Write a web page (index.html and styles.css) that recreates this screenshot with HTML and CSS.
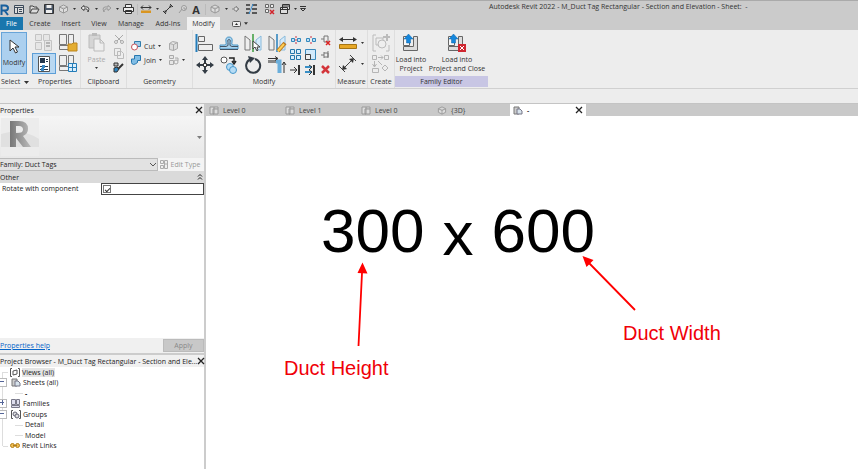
FILE: index.html
```html
<!DOCTYPE html>
<html lang="en">
<head>
<meta charset="utf-8">
<title>Autodesk Revit 2022</title>
<link rel="stylesheet" href="styles.css">
</head>
<body>
<svg class="defs" aria-hidden="true">
  <symbol id="sheet" viewBox="0 0 10 9"><path d="M1 1h5v7H1z" fill="#ccc" stroke="#777"/><path d="M4 3h3l2 2v3H4z" fill="#d7e3ec" stroke="#778"/></symbol>
  <symbol id="plan" viewBox="0 0 10 9"><path d="M1 1h4v7H1zM5 1h4v2M4 3h5v5H4z" fill="#ddd" stroke="#999"/></symbol>
  <symbol id="cube" viewBox="0 0 10 10"><path d="M5 1l4 2v4L5 9 1 7V3zM1 3l4 2 4-2M5 5v4" fill="#ddd" stroke="#999"/></symbol>
  <symbol id="drop" viewBox="0 0 5 3"><path d="M0 0h5L2.500 3z" fill="#333"/></symbol>
  <symbol id="cross" viewBox="0 0 8 8"><path d="M1 1l6 6M7 1L1 7" stroke="#222" stroke-width="1.300" fill="none"/></symbol>
  <symbol id="load" viewBox="0 0 18 18"><path d="M1.500 2.500h6v9h-6zM1.500 12.500v4h14v-14h-4v10z" fill="#f8f8f8" stroke="#666"/><path d="M12 3h3v13H2v-3h10z" fill="#ddd"/><path d="M6.500 0L11 5H8.500v4h-4V5H2z" fill="#1687dc" stroke="#0b65ad" stroke-width=".500"/></symbol>
</svg>

<header class="titlebar">
  <nav class="quick" aria-label="Quick access">
    <button class="logo" aria-label="Application menu"><svg width="9" height="11" viewBox="0 0 9 11"><path d="M1.500 11V1.500h3.500q3 0 3 2.500T5 6.500H2M4.500 6.500L8 11" fill="none" stroke="#175f9d" stroke-width="2"/></svg></button>
    <button aria-label="Home"><svg width="10" height="9" viewBox="0 0 10 9"><path d="M.5.5h9v8h-9zM.5 2.500h9M3.500 2.500v6M5 4.500h3M5 6.500h3" fill="#ddd" stroke="#3c4a5a"/></svg></button>
    <button aria-label="Open"><svg width="11" height="9" viewBox="0 0 11 9"><path d="M1 8V1h3l1 1h3v2M1 8l2-4h7L8 8z" fill="#ddd" stroke="#444"/></svg></button>
    <button aria-label="Save"><svg width="10" height="10" viewBox="0 0 10 10"><path d="M.5.5h9v9h-9z" fill="#4c5868" stroke="#333"/><path d="M2.500 1h5v3h-5zM2 6h6v3H2z" fill="#eee"/></svg></button>
    <button aria-label="Sync"><svg width="11" height="10"><use href="#cube"/></svg></button>
    <button aria-label="Sync options"><svg width="3" height="2"><use href="#drop"/></svg></button>
    <button aria-label="Undo"><svg width="10" height="8" viewBox="0 0 10 8"><path d="M4 .5L1 3l3 2.500V4q4-1 4 3 3-6-4-5z" fill="#eee" stroke="#444"/></svg></button>
    <button aria-label="Undo options"><svg width="3" height="2"><use href="#drop"/></svg></button>
    <button aria-label="Redo"><svg width="10" height="8" viewBox="0 0 10 8"><path d="M6 .5L9 3 6 5.500V4q-4-1-4 3-3-6 4-5z" fill="#ccc" stroke="#999"/></svg></button>
    <button aria-label="Redo options"><svg width="3" height="2"><use href="#drop"/></svg></button>
    <button aria-label="Print"><svg width="11" height="10" viewBox="0 0 11 10"><path d="M2.500 3V.5h6V3M.5 3.500h10v4H.5zM2.500 6.500h6v3h-6z" fill="#eee" stroke="#333"/></svg></button>
    <i class="rule"></i>
    <button aria-label="Measure"><svg width="10" height="9" viewBox="0 0 10 9"><path d="M0 2.500h10M2 .5L0 2.500l2 2M8 .5l2 2-2 2" stroke="#333" fill="none"/><path d="M0 5.500h10V8H0z" fill="#d99520"/></svg></button>
    <button aria-label="Measure options"><svg width="3" height="2"><use href="#drop"/></svg></button>
    <button aria-label="Aligned dimension"><svg width="10" height="10" viewBox="0 0 10 10"><path d="M2 8l6-6M0 7l3 3M7 0l3 3" stroke="#333" fill="none"/><path d="M1 9l1-3 2 2zM9 1L6 2l2 2z" fill="#333"/></svg></button>
    <button aria-label="Tag"><svg width="9" height="9" viewBox="0 0 9 9"><circle cx="6" cy="3" r="2.500" fill="#ddd" stroke="#999"/><path d="M4 4L1 8M6 2v2h2" stroke="#999" fill="none"/></svg></button>
    <button class="letter" aria-label="Text">A</button>
    <i class="rule"></i>
    <button aria-label="3D view"><svg width="10" height="10"><use href="#cube"/></svg></button>
    <button aria-label="3D options"><svg width="3" height="2"><use href="#drop"/></svg></button>
    <button aria-label="Section"><svg width="8" height="8" viewBox="0 0 8 8"><path d="M0 4h2M4 1l3 3-3 3" stroke="#888" fill="none"/><circle cx="4" cy="4" r="2" fill="#ddd" stroke="#888"/></svg></button>
    <button aria-label="Thin lines"><svg width="11" height="10" viewBox="0 0 11 10"><path d="M0 1h4M6 1h5M0 5h4M6 5h5M0 9h4M6 9h5" stroke="#333" stroke-width="1.500"/><path d="M7 0L3 10" stroke="#3c91d5"/></svg></button>
    <button aria-label="Close inactive"><svg width="10" height="11" viewBox="0 0 10 11"><path d="M.5.5h3v3h-3zM5.500.5h3v3h-3zM.5 5.500h3v3h-3z" fill="#eee" stroke="#666"/><path d="M5 6l4 4M9 6l-4 4" stroke="#d2222a" stroke-width="1.500"/></svg></button>
    <button aria-label="Switch windows"><svg width="10" height="10" viewBox="0 0 10 10"><path d="M2.500.5h7v5h-7zM2.500 2h7M.5 3.500h7v6h-7zM.5 5.500h7" fill="#ddd" stroke="#333"/></svg></button>
    <button aria-label="Window options"><svg width="3" height="2"><use href="#drop"/></svg></button>
    <button aria-label="Customize"><svg width="6" height="6" viewBox="0 0 6 6"><path d="M0 .5h6M.5 2.500h5L3 5z" stroke="#333" fill="none"/></svg></button>
  </nav>
  <div class="caption">Autodesk Revit 2022 - M_Duct Tag Rectangular - Section and Elevation - Sheet:&nbsp; -</div>
</header>

<nav class="menu" aria-label="Ribbon tabs">
  <a class="file" href="#">File</a><a href="#">Create</a><a href="#">Insert</a><a href="#">View</a><a href="#">Manage</a><a href="#">Add-Ins</a><a class="current" href="#">Modify</a>
  <button aria-label="Ribbon display"><svg width="9" height="6" viewBox="0 0 9 6"><rect x=".5" y=".5" width="8" height="5" rx="1" fill="#eee" stroke="#555"/><path d="M3 4l1.500-2L6 4z" fill="#222"/></svg><svg width="4" height="3"><use href="#drop"/></svg></button>
</nav>

<section class="ribbon">
  <div class="group">
    <div class="body select"><button class="modify"><svg width="11" height="16" viewBox="0 0 11 16"><path d="M1 1v11l3-3 2.500 5 2-1L6 8h4z" fill="#fff" stroke="#333"/></svg>Modify</button></div>
    <h2>Select <svg width="5" height="3"><use href="#drop"/></svg></h2>
  </div>
  <div class="group">
    <div class="body props">
      <button aria-label="Family category"><svg width="20" height="19" viewBox="0 0 20 19"><path d="M1.500 1.500h6v6h-6zM9.500 1.500h6v6h-6zM1.500 9.500h6v7h-6zM10.500 7.500h7v10h-7z" fill="#e6e6e6" stroke="#c4c4c4"/><path d="M12 10h4M12 13h4" stroke="#b5b5b5" stroke-width="2"/></svg></button>
      <button aria-label="Family types"><svg width="20" height="19" viewBox="0 0 20 19"><path d="M1.500 1.500h7v10h-7zM10.500 1.500h5v10h-5zM1.500 12.500h14v4h-14z" fill="#eee" stroke="#777"/><path d="M10 11h4l1-1h4v8h-9z" fill="#e4ad31" stroke="#bd851c"/></svg></button>
      <button class="on" aria-label="Properties"><svg width="14" height="18" viewBox="0 0 14 18"><path d="M1.500 1.500h11v15h-11z" fill="#fff" stroke="#555"/><path d="M3 3h5v5H3z" fill="#26384d"/><path d="M9 4.500h2M9 6.500h2M3 11.500h8M3 14.500h8" stroke="#26384d"/><path d="M5 10h3v3H5zM4 13h3v3H4z" fill="#3b8ac6"/></svg></button>
      <button aria-label="Type properties"><svg width="20" height="19" viewBox="0 0 20 19"><path d="M1.500 1.500h7v10h-7zM10.500 1.500h5v10h-5zM1.500 12.500h14v4h-14z" fill="#eee" stroke="#777"/><path d="M10.500 9.500h8v8h-8zM14.500 9.500v8M10.500 13.500h8" fill="#dbeefb" stroke="#247db9"/></svg></button>
    </div>
    <h2>Properties</h2>
  </div>
  <div class="group">
    <div class="body clip">
      <button class="paste"><svg width="17" height="20" viewBox="0 0 17 20"><path d="M1 3h11v13H1z" fill="#d5d5d5" stroke="#bbb"/><path d="M4 1h5v3H4z" fill="#bbb"/><path d="M6 7h6l4 4v8H6zM12 7v4h4" fill="#eee" stroke="#bbb"/></svg><span>Paste</span><svg width="3" height="2"><use href="#drop"/></svg></button>
      <div class="stack">
        <button aria-label="Cut"><svg width="10" height="10" viewBox="0 0 10 10"><path d="M1 1l6 6M9 1L3 7" stroke="#aaa" fill="none"/><circle cx="2" cy="8" r="1.500" fill="none" stroke="#aaa"/><circle cx="8" cy="8" r="1.500" fill="none" stroke="#aaa"/></svg></button>
        <button aria-label="Copy"><svg width="10" height="11" viewBox="0 0 10 11"><path d="M.5.5h6v7h-6zM3.500 3.500h4l2 2v5h-6z" fill="#eee" stroke="#bbb"/></svg></button>
        <button aria-label="Match type"><svg width="11" height="11" viewBox="0 0 11 11"><path d="M1 1h4v3H1z" fill="#bbb" stroke="#333"/><path d="M1 10V6l3-1 2 2-2 3z" fill="#2f83bd" stroke="#333"/><path d="M5 7l5-5" stroke="#333" stroke-width="2"/></svg></button>
      </div>
    </div>
    <h2>Clipboard</h2>
  </div>
  <div class="group">
    <div class="body geo">
      <button><svg width="10" height="10" viewBox="0 0 10 10"><path d="M3.500.5h6v5h-6z" fill="#9acbea" stroke="#317cab"/><circle cx="3.500" cy="6" r="3" fill="#fff" stroke="#c5525a"/></svg><span>Cut</span><svg width="3" height="2"><use href="#drop"/></svg></button>
      <button aria-label="Cope"><svg width="9" height="10" viewBox="0 0 9 10"><path d="M.5 2.500l4 1v6l-4-1zM4.500 3.500l4-2v6l-4 2M.5 2.500l3-2 5 1" fill="#ddd" stroke="#aaa"/></svg></button>
      <button><svg width="10" height="10" viewBox="0 0 10 10"><path d="M3.500.5h6v5h-3v2q-5 4-6 0V4h3z" fill="#80bde5" stroke="#2677ae"/></svg><span>Join</span><svg width="3" height="2"><use href="#drop"/></svg></button>
      <button aria-label="Split face"><svg width="10" height="10" viewBox="0 0 10 10"><path d="M.5.5h4v3h-4zM6 3h3v3M.5 5.500h4v4h-4z" fill="#e6e6e6" stroke="#aaa"/><circle cx="7" cy="7" r="2" fill="#eee" stroke="#aaa"/></svg><svg width="3" height="2"><use href="#drop"/></svg></button>
    </div>
    <h2>Geometry</h2>
  </div>
  <div class="group">
    <div class="body edit">
      <div class="large">
        <button aria-label="Align"><svg width="20" height="19" viewBox="0 0 20 19"><path d="M1.500 0v18" stroke="#237dbb" stroke-width="2"/><path d="M3.500 2.500h6v5h-6zM3.500 10.500h14v6h-14z" fill="#eee" stroke="#666"/></svg></button>
        <button aria-label="Offset"><svg width="20" height="18" viewBox="0 0 20 18"><path d="M1 11h5q2 0 1-3-1-5 3-5t3 5q-1 3 1 3h5v4H1z" fill="#a9d3ef" stroke="#4b96c6"/><path d="M1 15.500h18M1 12.500h6q3 0 2-4-1-3 1-3t1 3q-1 4 2 4h6" fill="none" stroke="#456"/></svg></button>
        <button aria-label="Mirror axis"><svg width="18" height="19" viewBox="0 0 18 19"><path d="M1 2l5 4v10H1z" fill="#eee" stroke="#777"/><path d="M17 2l-5 4v10h5z" fill="#d5ebfb" stroke="#8abbdc"/><path d="M9 0v18" stroke="#3a9b3d" stroke-width="1.500"/><path d="M9 7v8l2-2 2 4 1-1-1-3h3z" fill="#fff" stroke="#444"/></svg></button>
        <button aria-label="Mirror draw"><svg width="18" height="19" viewBox="0 0 18 19"><path d="M1 2l5 4v10H1z" fill="#eee" stroke="#777"/><path d="M17 2l-5 4v10h5z" fill="#d5ebfb" stroke="#8abbdc"/><path d="M9 0v18" stroke="#277fbb" stroke-width="1.500"/><path d="M10 17l7-8" stroke="#b9781f" stroke-width="4"/><path d="M10 17l6-7" stroke="#ffcf54" stroke-width="2"/></svg></button>
        <button aria-label="Move"><svg width="18" height="18" viewBox="0 0 18 18"><path d="M9 0l3 4H6zM9 18l3-4H6zM0 9l4-3v6zM18 9l-4-3v6zM8 4h2v3H8zM8 11h2v3H8zM4 8h3v2H4zM11 8h3v2h-3z" fill="#333c45"/><path d="M7.500 7.500h3v3h-3z" fill="#fff" stroke="#333"/></svg></button>
        <button aria-label="Copy element"><svg width="18" height="18" viewBox="0 0 18 18"><circle cx="4" cy="4" r="3" fill="#fff" stroke="#555"/><path d="M9 2h5v4M12 5l2 3 2-3" fill="none" stroke="#222" stroke-width="1.500"/><circle cx="10" cy="11" r="3.500" fill="#b6dcf5" stroke="#4697ca"/><circle cx="13" cy="14" r="3.500" fill="#b6dcf5" stroke="#4697ca"/></svg></button>
        <button aria-label="Rotate"><svg width="18" height="18" viewBox="0 0 18 18"><path d="M11 3a7 7 0 1 1-5 .5" fill="none" stroke="#333c45" stroke-width="2"/><path d="M4 0l7 2-5 5z" fill="#333c45"/></svg></button>
        <button aria-label="Trim"><svg width="18" height="18" viewBox="0 0 18 18"><path d="M8 5.500h3.500V17" fill="none" stroke="#6aaedb" stroke-width="4"/><path d="M0 5.500h8" stroke="#888" stroke-width="3"/><path d="M0 2.500h10M7 .5l3 2-3 2M16 17V6M14 9l2-3 2 3" fill="none" stroke="#333"/></svg></button>
      </div>
      <div class="small">
        <button aria-label="Split"><svg width="10" height="8" viewBox="0 0 10 8"><path d="M.5 2.500h3v3h-3zM6.500 2.500h3v3h-3z" fill="#c0e0f5" stroke="#3388bd"/><path d="M5 0v8" stroke="#c34" stroke-dasharray="2 1"/></svg></button>
        <button aria-label="Split gap"><svg width="10" height="8" viewBox="0 0 10 8"><path d="M.5 2.500h3v3h-3zM6.500 2.500h3v3h-3z" fill="#c0e0f5" stroke="#3388bd"/><path d="M5 0v2M5 6v2" stroke="#c34"/></svg></button>
        <button aria-label="Unpin"><svg width="10" height="10" viewBox="0 0 10 10"><path d="M0 4h3V1h4v6H3V4" fill="none" stroke="#777"/><path d="M5 6l4 4M9 6l-4 4" stroke="#d22" stroke-width="1.500"/></svg></button>
        <button aria-label="Array"><svg width="11" height="11" viewBox="0 0 11 11"><path d="M.5.5h4v4h-4zM6.500.5h4v4h-4zM.5 6.500h4v4h-4zM6.500 6.500h4v4h-4z" fill="#d9eefc" stroke="#2476ab"/></svg></button>
        <button aria-label="Scale"><svg width="11" height="11" viewBox="0 0 11 11"><path d="M.5.5h10v10H.5z" fill="#d2eafb" stroke="#3b89bb"/><path d="M.5 5.500h5v5h-5z" fill="#eee" stroke="#444"/></svg></button>
        <button aria-label="Pin"><svg width="9" height="8" viewBox="0 0 9 8"><path d="M0 4h3M3 1v6M3 2h4v4H3M7 0v7" fill="none" stroke="#777"/></svg></button>
        <button aria-label="Trim single"><svg width="11" height="10" viewBox="0 0 11 10"><path d="M9 0v10" stroke="#333" stroke-width="2"/><path d="M0 5h7M4 2l3 3-3 3" stroke="#333" fill="none"/></svg></button>
        <button aria-label="Trim multiple"><svg width="11" height="10" viewBox="0 0 11 10"><path d="M9 0v10" stroke="#333" stroke-width="2"/><path d="M0 2h7M0 7h7" stroke="#388fc6" stroke-width="2"/><path d="M4 0l3 2-3 3M4 5l3 2-3 3" stroke="#333" fill="none"/></svg></button>
        <button aria-label="Delete"><svg width="9" height="9" viewBox="0 0 9 9"><path d="M1 1l7 7M8 1L1 8" stroke="#d3353b" stroke-width="2.500"/></svg></button>
      </div>
    </div>
    <h2>Modify</h2>
  </div>
  <div class="group">
    <div class="body measure">
      <button aria-label="Measure distance"><svg width="18" height="12" viewBox="0 0 18 12"><path d="M2 2.500h14" stroke="#333"/><path d="M0 2.500L4 0v5zM18 2.500L14 0v5z" fill="#333"/><path d="M.5 7.500h17v4H.5z" fill="#e7a827" stroke="#a67514"/></svg><svg width="3" height="2"><use href="#drop"/></svg></button>
      <button aria-label="Dimension"><svg width="18" height="18" viewBox="0 0 18 18"><path d="M4 14L14 4M0 11l6 6M11 0l6 6" stroke="#444"/><path d="M3 15l1-5 4 4zM15 3l-5 1 4 4z" fill="#333"/></svg><svg width="3" height="2"><use href="#drop"/></svg></button>
    </div>
    <h2>Measure</h2>
  </div>
  <div class="group">
    <div class="body create">
      <button aria-label="Create group"><svg width="18" height="18" viewBox="0 0 18 18"><path d="M4 1H1v16h3M14 17h3v-6M4 4h7v7H4z" fill="#eee" stroke="#bbb"/><circle cx="10" cy="10" r="4" fill="#eee" stroke="#bbb"/><path d="M15 0v7M11 3h7" stroke="#bbb" stroke-width="2"/></svg></button>
      <button aria-label="Create similar"><svg width="18" height="18" viewBox="0 0 18 18"><path d="M.5.5h4v4h-4zM12.500.5h4v4h-4zM.5 13.500h6v4h-6zM13 10l3 3-3 3-3-3zM6 2.500h5M2.500 6v6M6 6l4 4M9 .5l2 2-2 2M.5 9l2 3 2-3" fill="none" stroke="#b5b5b5"/></svg></button>
    </div>
    <h2>Create</h2>
  </div>
  <div class="group family">
    <div class="body loads">
      <button><svg width="18" height="18"><use href="#load"/></svg><span>Load into<br>Project</span></button>
      <button><svg width="20" height="18" viewBox="0 0 20 18"><use href="#load" width="18" height="18"/><path d="M11 10h8v8h-8z" fill="#cf2630"/><path d="M13 12l4 4M17 12l-4 4" stroke="#fff"/></svg><span>Load into<br>Project and Close</span></button>
    </div>
    <h2>Family Editor</h2>
  </div>
</section>
<div class="options"></div>

<main>
  <aside>
    <section class="properties">
      <header><h1>Properties</h1><button aria-label="Close properties"><svg width="8" height="8"><use href="#cross"/></svg></button></header>
      <div class="preview">
        <svg width="38" height="38" viewBox="0 0 38 38"><defs><linearGradient id="metal" x2="1"><stop stop-color="#777"/><stop offset="1" stop-color="#bbb"/></linearGradient></defs><path d="M0 0h38v38H0z" fill="#ececec"/><path d="M0 16q20-7 38 5v8H0z" fill="#e0e0e0"/><path d="M9 3v26h6v-9l7 9h8l-8-11q5-2 5-7 0-8-9-8zM15 8h3q4 0 4 3.500T17 15h-2z" fill="url(#metal)" fill-rule="evenodd"/></svg>
        <svg width="5" height="3" opacity=".6"><use href="#drop"/></svg>
      </div>
      <div class="family-row">
        <select aria-label="Family"><option>Family: Duct Tags</option></select>
        <svg class="chevron" width="6" height="4" viewBox="0 0 6 4"><path d="M0 0l3 3 3-3" fill="none" stroke="#555"/></svg>
        <button disabled><svg width="9" height="9" viewBox="0 0 9 9"><path d="M.5.5h3v3h-3zM4.500.5h3v8h-3zM.5 5.500h3v3h-3zM5 4h3" fill="#eee" stroke="#aaa"/></svg>Edit Type</button>
      </div>
      <div class="category"><span>Other</span><svg width="4" height="6" viewBox="0 0 4 6"><path d="M0 2.500l2-2 2 2M0 5.500l2-2 2 2" fill="none" stroke="#222"/></svg></div>
      <div class="property"><label for="rotate">Rotate with component</label><div><input id="rotate" type="checkbox" checked></div></div>
      <div class="space"></div>
      <footer><a href="#">Properties help</a><button disabled>Apply</button></footer>
    </section>
    <section class="browser">
      <header><h1>Project Browser - M_Duct Tag Rectangular - Section and Ele...</h1><button aria-label="Close browser"><svg width="8" height="8"><use href="#cross"/></svg></button></header>
      <ul>
        <li class="picked"><svg width="10" height="9" viewBox="0 0 10 9"><path d="M2 .5H.5v8H2M8 .5h1.500v8H8M3 3l4-1v4L3 7z" fill="none" stroke="#555"/></svg><span>Views (all)</span></li>
        <li class="minus"><svg width="10" height="9"><use href="#sheet"/></svg><span>Sheets (all)</span></li>
        <li class="leaf"><b>-</b></li>
        <li class="plus"><svg width="10" height="9" viewBox="0 0 10 9"><path d="M.5.5h4v5h-4zM5.500.5h3v5h-3zM.5 6.500h8v2h-8z" fill="#dde" stroke="#778"/></svg><span>Families</span></li>
        <li class="minus"><svg width="10" height="9" viewBox="0 0 10 9"><path d="M2 .5H.5v8H2M8 .5h1.500v8H8" fill="none" stroke="#555"/><circle cx="4" cy="4" r="2" fill="#ddd" stroke="#667"/><circle cx="6" cy="6" r="2" fill="#ddd" stroke="#667"/></svg><span>Groups</span></li>
        <li class="leaf"><span>Detail</span></li>
        <li class="leaf"><span>Model</span></li>
        <li><svg width="10" height="5" viewBox="0 0 10 5"><rect x=".5" y=".5" width="4" height="4" rx="2" fill="#f0bd54" stroke="#b37f18"/><rect x="5.500" y=".5" width="4" height="4" rx="2" fill="#f0bd54" stroke="#b37f18"/><path d="M3 2.500h4" stroke="#b37f18"/></svg><span>Revit Links</span></li>
      </ul>
    </section>
  </aside>
  <section class="workspace">
    <nav class="views" aria-label="Open views">
      <a href="#"><svg width="10" height="9"><use href="#plan"/></svg>Level 0</a>
      <a href="#"><svg width="10" height="9"><use href="#plan"/></svg>Level 1</a>
      <a href="#"><svg width="10" height="9"><use href="#plan"/></svg>Level 0</a>
      <a href="#"><svg width="10" height="9"><use href="#cube"/></svg>{3D}</a>
      <a class="active" href="#"><svg width="10" height="9"><use href="#sheet"/></svg><b>-</b><svg class="close" width="8" height="8"><use href="#cross"/></svg></a>
    </nav>
    <div class="canvas">
      <div class="tag"><span>300</span><span class="by">x</span><span>600</span></div>
      <svg class="arrows" width="480" height="260" viewBox="0 0 480 260"><path d="M152.500 230L156 157M429 194L383 147" stroke="#f00" stroke-width="1.800"/><path d="M156.500 146.500L161.500 157.500L151.500 157zM376.500 140L387.500 144L380.500 151z" fill="#f00"/></svg>
      <p class="note height">Duct Height</p>
      <p class="note width">Duct Width</p>
    </div>
  </section>
</main>
</body>
</html>
```
FILE: styles.css
```css
* { box-sizing: border-box; }
body {
  margin: 0;
  min-height: 100vh;
  display: flex;
  flex-direction: column;
  overflow: hidden;
  background: #ededed;
  color: #333;
  font: 7px/9px "Open Sans", "Noto Sans", sans-serif;
}
button {
  margin: 0;
  padding: 0;
  border: 0;
  background: none;
  color: inherit;
  font: inherit;
  display: flex;
  align-items: center;
  justify-content: center;
}
a { color: inherit; text-decoration: none; }
h1, h2, p, ul { margin: 0; padding: 0; font: inherit; }
svg { display: block; flex: none; overflow: visible; }
.defs { position: absolute; width: 0; height: 0; }

/* Title bar */
.titlebar {
  height: 17px;
  display: flex;
  justify-content: space-between;
  background: #cbcbcb;
  border-top: 1px solid #aaa;
}
.quick {
  display: grid;
  grid-template-columns: 11px 15px 16px 14px 14px 8px 14px 8px 13px 8px 14px 4px 14px 8px 14px 14px 14px 5px 14px 8px 12px 19px 17px 14px 6px 10px;
  align-items: center;
}
.logo { justify-content: flex-start; }
.rule { justify-self: center; width: 1px; height: 11px; background: #bbb; }
.letter { font-size: 11px; font-weight: bold; }
.caption { width: 369px; padding-top: 1px; white-space: nowrap; }

/* Ribbon tabs */
.menu {
  height: 13px;
  display: grid;
  grid-template-columns: 23px 34px 28px 28px 36px 38px 33px 40px;
  background: #cbcbcb;
  line-height: 13px;
  text-align: center;
}
.menu .file { background: #1976ad; color: #fff; }
.menu .current { background: #f0f0f0; }
.menu button { gap: 3px; }

/* Ribbon */
.ribbon {
  height: 58px;
  display: grid;
  grid-template-columns: 30px 51px 46px 66px 143px 32px 27px 93px;
  background: #ededed;
}
.group {
  display: flex;
  flex-direction: column;
  border-right: 1px solid #dedede;
  min-width: 0;
}
.group:first-child, .family { border: 0; }
.group h2 {
  height: 11px;
  line-height: 11px;
  text-align: center;
  white-space: nowrap;
}
.group h2 svg { display: inline-block; vertical-align: middle; margin-left: 2px; }
.family h2 { background: #c8c6e4; }
.body { height: 46px; padding-top: 2px; }
.select { padding-left: 1px; }
.modify {
  width: 26px;
  height: 42px;
  flex-direction: column;
  gap: 3px;
  background: #acd0ef;
  border: 1px solid #68a4d8;
}
.props {
  display: grid;
  grid-template-columns: 24px 24px;
  grid-template-rows: 21px 21px;
  padding-left: 2px;
}
.props .on { background: #b9d8f2; border: 1px solid #5c9ed7; }
.clip { display: grid; grid-template-columns: 31px 13px; }
.paste { flex-direction: column; gap: 3px; color: #aaa; justify-content: flex-start; }
.stack { display: grid; grid-template-rows: repeat(3, 14px); }
.geo {
  display: grid;
  grid-template-columns: 38px 22px;
  grid-template-rows: 14px 14px;
  padding: 9px 0 0 4px;
  align-content: start;
}
.geo button { justify-content: flex-start; gap: 3px; }
.edit { display: grid; grid-template-columns: 95px 46px; }
.large { display: grid; grid-template-columns: repeat(4, 24px); grid-template-rows: 22px 22px; }
.small { display: grid; grid-template-columns: repeat(3, 15px); grid-template-rows: repeat(3, 15px); }
.measure, .create { display: grid; grid-template-rows: 21px 21px; }
.measure button { gap: 4px; }
.loads { display: grid; grid-template-columns: 32px 60px; padding-top: 4px; }
.loads button { flex-direction: column; gap: 3px; justify-content: flex-start; white-space: nowrap; }
.options { height: 16px; border-top: 1px solid #d0d0d0; border-bottom: 1px solid #c4c4c4; }

/* Side panels */
main { flex: 1; display: grid; grid-template-columns: 206px minmax(0, 1fr); }
aside { display: flex; flex-direction: column; border-right: 2px solid #ccc; background: #f0f0f0; color: #222; }
.properties { flex: 1; display: flex; flex-direction: column; }
aside header {
  height: 12px;
  display: flex;
  align-items: center;
  justify-content: space-between;
  padding-right: 1px;
  white-space: nowrap;
}
.preview {
  height: 42px;
  display: flex;
  align-items: center;
  justify-content: space-between;
  padding: 0 2px 0 1px;
  background: linear-gradient(#f5f5f5, #e8e8e8);
}
.family-row { height: 13px; display: flex; align-items: center; background: #f4f4f4; }
select {
  appearance: none;
  width: 158px;
  height: 13px;
  padding: 0;
  border: 1px solid #bbb;
  border-left: 0;
  border-radius: 0;
  background: #e2e2e2;
  color: #222;
  font: inherit;
}
.chevron { margin-left: -8px; pointer-events: none; }
.family-row button { flex: 1; gap: 2px; color: #999; white-space: nowrap; }
.category {
  height: 12px;
  display: flex;
  align-items: center;
  justify-content: space-between;
  padding-right: 2px;
  background: #dadada;
}
.property { height: 12px; display: grid; grid-template-columns: 101px 1fr; background: #fff; }
.property label { padding-left: 2px; line-height: 12px; }
.property div { display: flex; align-items: center; padding-left: 1px; border: 1px solid #444; }
input {
  appearance: none;
  width: 8px;
  height: 8px;
  margin: 0;
  border: 1px solid #777;
  display: grid;
  place-items: center;
}
input:checked::before {
  content: "";
  width: 4px;
  height: 2px;
  border: solid #333;
  border-width: 0 0 1px 1px;
  transform: rotate(-45deg);
}
.space { flex: 1; background: #fff; }
.properties footer { height: 15px; display: flex; justify-content: space-between; align-items: center; }
footer a { color: #0665c9; text-decoration: underline; }
footer button { width: 41px; height: 13px; background: #c8c8c8; border: 1px solid #bbb; color: #888; }
.browser { min-height: 116px; border-top: 2px solid #ccc; background: #fff; }
.browser header { background: #f0f0f0; }
.browser ul {
  height: 84px;
  display: grid;
  grid-template-rows: repeat(8, 1fr);
  list-style: none;
  background: linear-gradient(#ddd, #ddd) 2px 5px / 1px 74px no-repeat;
}
.browser li { display: flex; align-items: center; gap: 2px; padding-left: 10px; background: linear-gradient(#ddd, #ddd) 3px 5px / 5px 1px no-repeat; }
.browser .picked span { background: #e5e5e5; padding-right: 1px; }
.browser .minus, .browser .plus { padding-left: 0; gap: 2px; background: none; }
.minus::before, .plus::before {
  content: "";
  width: 6px;
  height: 7px;
  margin-right: 2px;
  border: 1px solid #bbb;
  border-left: 0;
  background: linear-gradient(#569, #569) 0 2px / 4px 1px no-repeat #fff;
}
.plus::before {
  background:
    linear-gradient(#569, #569) 0 2px / 4px 1px no-repeat,
    linear-gradient(#569, #569) 2px 0 / 1px 5px no-repeat #fff;
}
.browser .leaf { padding-left: 25px; background-position: 15px 5px; background-size: 8px 1px; }

/* Drawing area */
.workspace { display: flex; flex-direction: column; min-width: 0; background: #fff; }
.views { height: 12px; display: grid; grid-template-columns: repeat(5, 76px); background: #c9c9c9; color: #444; }
.views a { display: flex; align-items: center; gap: 4px; padding: 0 3px; }
.views .active { background: #fff; }
.close { margin-left: auto; }
.canvas { flex: 1; position: relative; font-family: "Liberation Sans", Arial, sans-serif; }
.tag {
  position: absolute;
  left: 115px;
  top: 79px;
  display: flex;
  gap: 18px;
  color: #000;
  font-size: 62px;
  line-height: 72px;
}
.by { padding-top: 3px; }
.arrows { position: absolute; left: 0; top: 0; }
.note { position: absolute; color: #f00008; font-size: 20px; line-height: 24px; white-space: nowrap; }
.height { left: 78px; top: 240px; }
.width { left: 417px; top: 205px; }
```
